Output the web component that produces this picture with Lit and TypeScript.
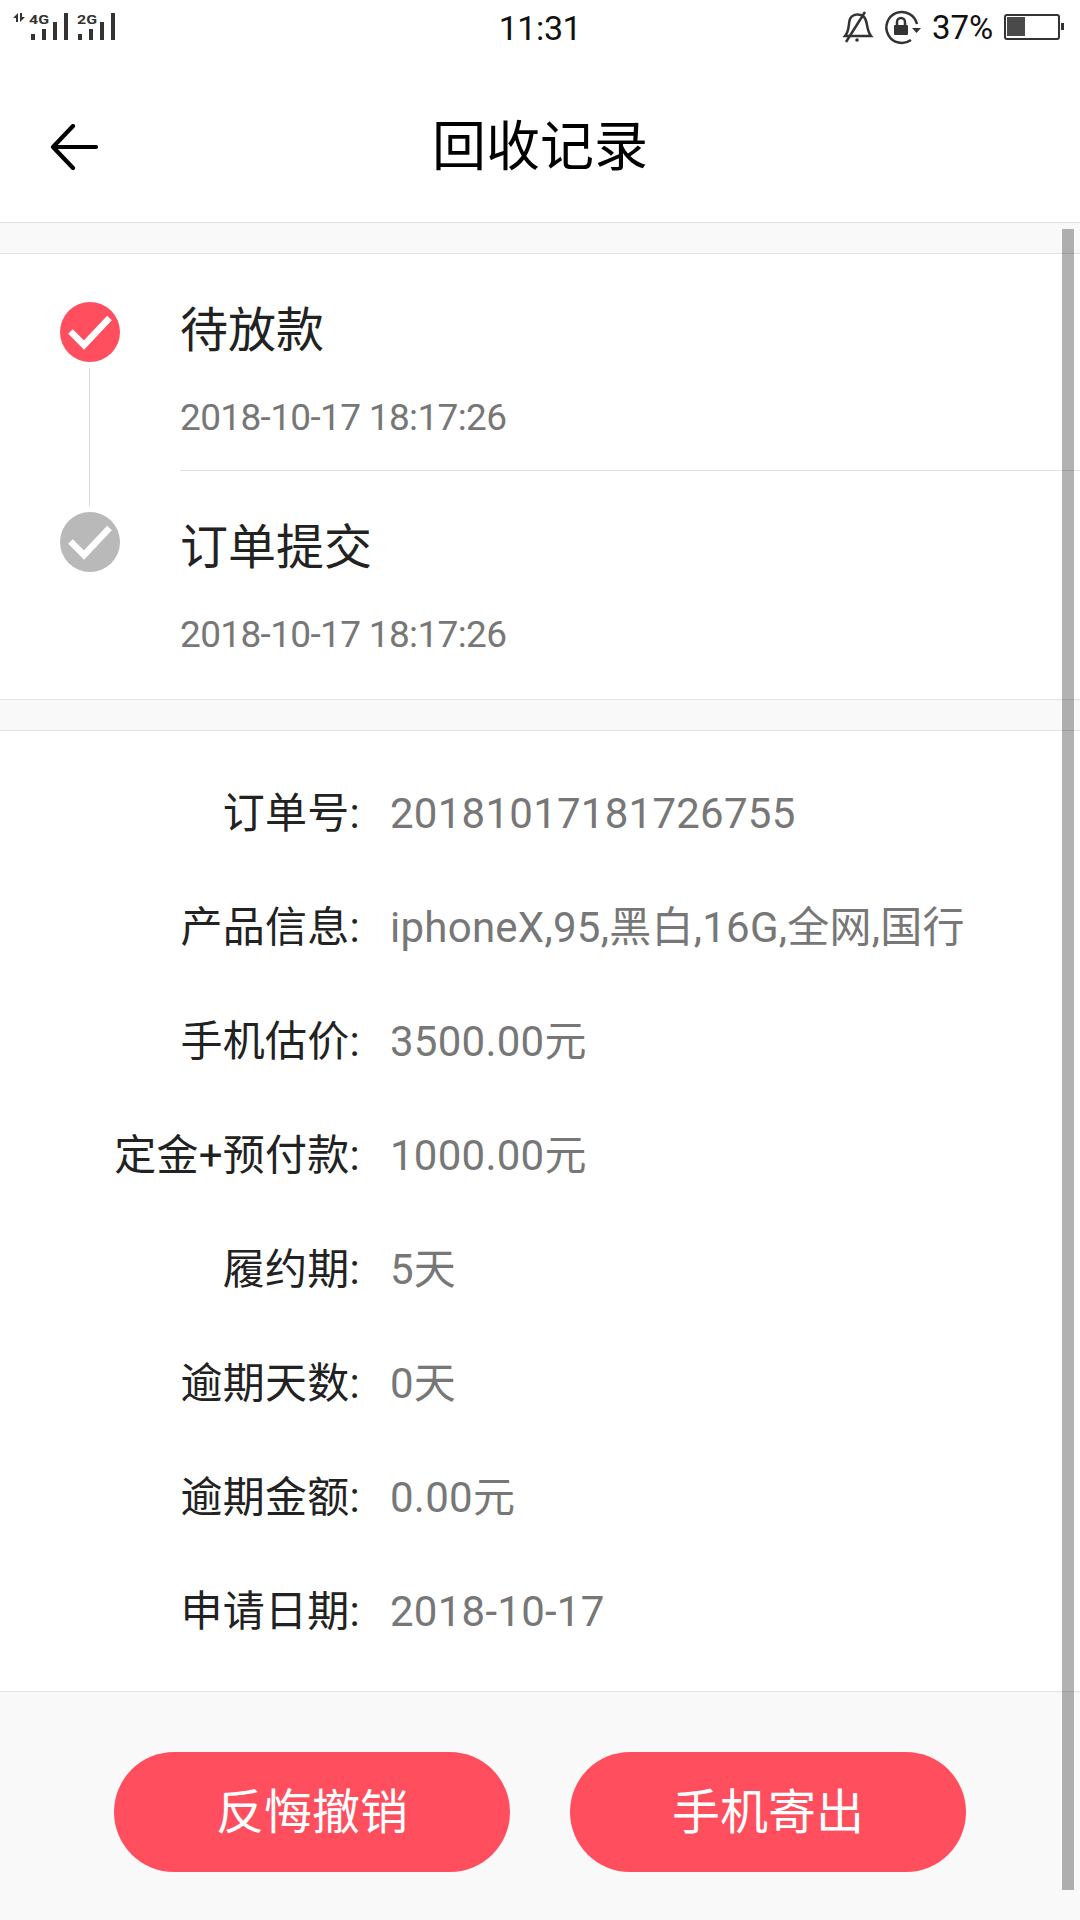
import { LitElement, html, css, svg } from "lit";
import { customElement } from "lit/decorators.js";

const rows: [string, string][] = [
  ["订单号:", "20181017181726755"],
  ["产品信息:", "iphoneX,95,黑白,16G,全网,国行"],
  ["手机估价:", "3500.00元"],
  ["定金+预付款:", "1000.00元"],
  ["履约期:", "5天"],
  ["逾期天数:", "0天"],
  ["逾期金额:", "0.00元"],
  ["申请日期:", "2018-10-17"],
];

const bars = (x: number) => [
  [x, 34, 6], [x + 11, 29, 11], [x + 22, 22, 18], [x + 33, 13, 27],
].map(([bx, y, h]) => svg`<rect x=${bx} y=${y} width="4" height=${h} fill="#333"></rect>`);

@customElement("app-root")
export class AppRoot extends LitElement {
  static styles = css`
    :host { display: flex; flex-direction: column; position: relative; width: 1080px; height: 1920px; overflow: hidden; background: #fff; font-family: Roboto, "Noto Sans CJK SC", sans-serif; }
    .status { height: 74px; flex: none; display: grid; grid-template-columns: 1fr auto 1fr; align-items: start; }
    .status svg { display: block; }
    .time { font-size: 34px; line-height: 57px; color: #111; letter-spacing: -0.4px; }
    .status-right { display: flex; justify-content: flex-end; }
    .header { height: 149px; flex: none; display: flex; align-items: center; justify-content: center; position: relative; box-sizing: border-box; border-bottom: 1px solid #e3e3e3; }
    .back { position: absolute; left: 50px; top: 50px; }
    .title { font-size: 54px; color: #000; line-height: 60px; }
    .band { height: 31px; flex: none; box-sizing: border-box; background: #f9f9f9; border-bottom: 1px solid #e3e3e3; }
    .step { display: flex; flex: none; box-sizing: border-box; }
    .step.first { height: 217px; }
    .step.second { height: 229px; border-bottom: 1px solid #e3e3e3; }
    .rail { width: 60px; margin: 0 60px; flex: none; display: flex; flex-direction: column; align-items: center; }
    .first .rail { padding-top: 48px; }
    .second .rail { padding-top: 41px; }
    .dot { width: 60px; height: 60px; display: block; flex: none; }
    .line { width: 1px; background: #dcdcdc; height: 138px; margin-top: 6px; margin-right: 1px; flex: none; }
    .step-body { flex: 1; box-sizing: border-box; }
    .first .step-body { border-bottom: 1px solid #e3e3e3; padding-top: 47px; }
    .second .step-body { padding-top: 47px; }
    .step-title { font-size: 48px; line-height: 60px; color: #222; }
    .step-date { font-size: 37px; line-height: 48px; color: #777; margin-top: 33px; letter-spacing: -0.65px; }
    .details { flex: 1; padding-top: 26px; display: flex; flex-direction: column; }
    .row { height: 114px; display: flex; line-height: 114px; font-size: 42px; }
    .label { width: 360px; text-align: right; color: #222; flex: none; letter-spacing: 0.25px; }
    .value { margin-left: 30px; color: #777; letter-spacing: 0.25px; }
    .footer { height: 229px; flex: none; box-sizing: border-box; background: #f9f9f9; border-top: 1px solid #e3e3e3; padding: 60px 0 0 114px; display: flex; gap: 60px; align-items: flex-start; }
    .btn { width: 396px; height: 120px; box-sizing: border-box; padding-top: 2px; border-radius: 60px; background: #ff4f5e; color: #fff; font-size: 48px; line-height: 60px; display: flex; align-items: center; justify-content: center; }
    .scrollbar { position: absolute; left: 1062px; top: 229px; width: 12px; height: 1661px; background: rgba(0,0,0,0.3); }
  `;

  private dot(color: string) {
    return html`<svg class="dot" viewBox="0 0 60 60"><circle cx="30" cy="30" r="30" fill=${color}></circle><path d="M10.500 29.500 L24 43 L49.500 16" fill="none" stroke="#fff" stroke-width="6.500"></path></svg>`;
  }

  render() {
    return html`
      <div class="status">
        <svg width="120" height="56" viewBox="0 0 120 56">
          <path d="M13 18 L18 13 V22 H16 V18 Z M20 13 H22 V17 H25 L20 22 Z" fill="#333"></path>
          <text x="29" y="23.500" font-size="13" font-weight="700" font-family="Roboto" fill="#333" textLength="20" lengthAdjust="spacingAndGlyphs">4G</text>
          <text x="77" y="23.500" font-size="13" font-weight="700" font-family="Roboto" fill="#333" textLength="20" lengthAdjust="spacingAndGlyphs">2G</text>
          ${bars(31)}${bars(78)}
        </svg>
        <div class="time">11:31</div>
        <div class="status-right">
          <svg width="248" height="56" viewBox="832 0 248 56">
            <path d="M845 36 C850 30 848 24 850 19 C852 14 860 13 864 17 C868 21 866 30 871 36 Z" fill="none" stroke="#333" stroke-width="2.500"></path>
            <path d="M846 42 L865 12" stroke="#333" stroke-width="2.500"></path>
            <circle cx="857" cy="40" r="1.800" fill="#333"></circle>
            <path d="M917 24 A15.500 15.500 0 1 0 911 40" fill="none" stroke="#333" stroke-width="2.500"></path>
            <path d="M912 28 H921 L916.500 33 Z" fill="#333"></path>
            <rect x="894" y="25" width="14" height="10" rx="1" fill="#333"></rect>
            <path d="M897 25 V22 A4 4 0 0 1 905 22 V25" fill="none" stroke="#333" stroke-width="2.500"></path>
            <text x="932" y="39" font-size="33" font-family="Roboto" fill="#111">37%</text>
            <rect x="1005" y="15" width="54" height="24" rx="2" fill="none" stroke="#333" stroke-width="2"></rect>
            <rect x="1007" y="17" width="18" height="19" fill="#4a4a4a"></rect>
            <rect x="1061" y="23" width="3" height="7" fill="#333"></rect>
          </svg>
        </div>
      </div>
      <div class="header">
        <svg class="back" width="50" height="46" viewBox="50 124 50 46"><path d="M96 147 H54 M73 126 L53 147 L73 168" fill="none" stroke="#000" stroke-width="4.200" stroke-linecap="round" stroke-linejoin="round"></path></svg>
        <div class="title">回收记录</div>
      </div>
      <div class="band"></div>
      <div class="step first">
        <div class="rail">${this.dot("#ff4f5e")}<div class="line"></div></div>
        <div class="step-body">
          <div class="step-title">待放款</div>
          <div class="step-date">2018-10-17 18:17:26</div>
        </div>
      </div>
      <div class="step second">
        <div class="rail">${this.dot("#b9b9b9")}</div>
        <div class="step-body">
          <div class="step-title">订单提交</div>
          <div class="step-date">2018-10-17 18:17:26</div>
        </div>
      </div>
      <div class="band"></div>
      <div class="details">
        ${rows.map(([l, v]) => html`<div class="row"><div class="label">${l}</div><div class="value">${v}</div></div>`)}
      </div>
      <div class="footer">
        <div class="btn">反悔撤销</div>
        <div class="btn">手机寄出</div>
      </div>
      <div class="scrollbar"></div>
    `;
  }
}
